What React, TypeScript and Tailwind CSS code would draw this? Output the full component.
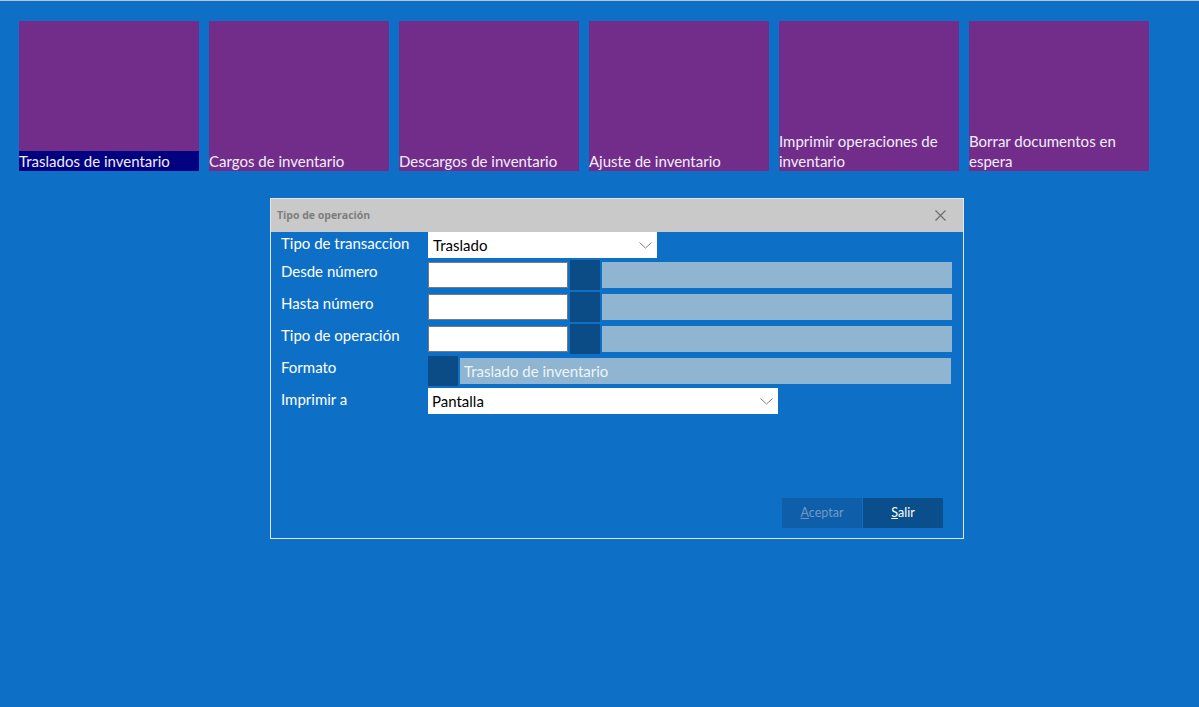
import React from "react";

const TILES = [
  { label: "Traslados de inventario", active: true },
  { label: "Cargos de inventario" },
  { label: "Descargos de inventario" },
  { label: "Ajuste de inventario" },
  { label: "Imprimir operaciones de inventario" },
  { label: "Borrar documentos en espera" },
];

const font = { fontFamily: "Lato, 'Open Sans', sans-serif" };

function Chevron() {
  return (
    <svg width="13" height="7" viewBox="0 0 13 7" className="mr-[2px] text-[#808080]">
      <path d="M0.5 0.5 L6.5 6 L12.5 0.5" fill="none" stroke="currentColor" strokeWidth="1" />
    </svg>
  );
}

function LookupRow({ label }: { label: string }) {
  return (
    <div className="flex h-[30px]">
      <div className="w-[147px] pt-[1px] text-[15px] leading-[20px] text-white">{label}</div>
      <div className="my-[2px] h-[26px] w-[140px] border border-[#7a7a7a] bg-white" />
      <div className="ml-[2px] h-[30px] w-[30px] bg-[#0b4c87]" />
      <div className="my-[2px] ml-[2px] h-[26px] w-[350px] bg-[#8fb5d0]" />
    </div>
  );
}

export default function App() {
  return (
    <div className="min-h-[707px] w-full overflow-hidden border-t border-[#b8c4cf] bg-[#0e6fc7]" style={font}>
      {/* tiles */}
      <div className="flex gap-[10px] pl-[19px] pt-[20px]">
        {TILES.map((t) => (
          <div key={t.label} className="flex h-[150px] w-[180px] flex-col justify-end bg-[#722d8b]">
            <div
              className={
                "text-[15px] leading-[20px] text-[#f1edfb] " + (t.active ? "bg-[#000080]" : "")
              }
            >
              {t.label}
            </div>
          </div>
        ))}
      </div>

      {/* dialog */}
      <div className="ml-[270px] mt-[27px] flex h-[341px] w-[694px] flex-col border border-[#dfe6ee]">
        <div className="flex h-[33px] items-center justify-between bg-[#c9c9c9] pl-[6px] pr-[17px]">
          <span className="text-[10.5px] font-bold text-[#7d7d7d]" style={{ fontFamily: "'Open Sans', sans-serif" }}>
            Tipo de operación
          </span>
          <svg width="11" height="11" viewBox="0 0 11 11" className="text-[#6e6e6e]">
            <path d="M0.5 0.5 L10.5 10.5 M10.5 0.5 L0.5 10.5" stroke="currentColor" strokeWidth="1.2" />
          </svg>
        </div>

        <div className="flex flex-col gap-[2px] pl-[10px]">
          <div className="flex h-[26px]">
            <div className="w-[147px] pt-[1px] text-[15px] leading-[20px] text-white">Tipo de transaccion</div>
            <div className="flex w-[229px] items-center justify-between bg-white pl-[5px] pr-[3px]">
              <span className="text-[15px] text-black">Traslado</span>
              <Chevron />
            </div>
          </div>

          <LookupRow label="Desde número" />
          <LookupRow label="Hasta número" />
          <LookupRow label="Tipo de operación" />

          <div className="flex h-[30px]">
            <div className="w-[147px] pt-[1px] text-[15px] leading-[20px] text-white">Formato</div>
            <div className="h-[30px] w-[30px] bg-[#0b4c87]" />
            <div className="my-[2px] ml-[2px] flex h-[26px] w-[491px] items-center bg-[#8fb5d0] pl-[4px] text-[15px] text-[#eef4f9]">
              Traslado de inventario
            </div>
          </div>

          <div className="flex h-[26px]">
            <div className="w-[147px] pt-[1px] text-[15px] leading-[20px] text-white">Imprimir a</div>
            <div className="flex w-[350px] items-center justify-between bg-white pl-[4px] pr-[3px]">
              <span className="text-[15px] text-black">Pantalla</span>
              <Chevron />
            </div>
          </div>
        </div>

        <div className="mt-auto flex justify-end gap-[1px] pb-[10px] pr-[20px]">
          <button className="h-[30px] w-[80px] bg-[#0f5ea9] text-[12.5px] text-[#6f9ac3]">
            <span className="underline">A</span>ceptar
          </button>
          <button className="h-[30px] w-[80px] bg-[#0a4e8c] text-[12.5px] text-white">
            <span className="underline">S</span>alir
          </button>
        </div>
      </div>
    </div>
  );
}
